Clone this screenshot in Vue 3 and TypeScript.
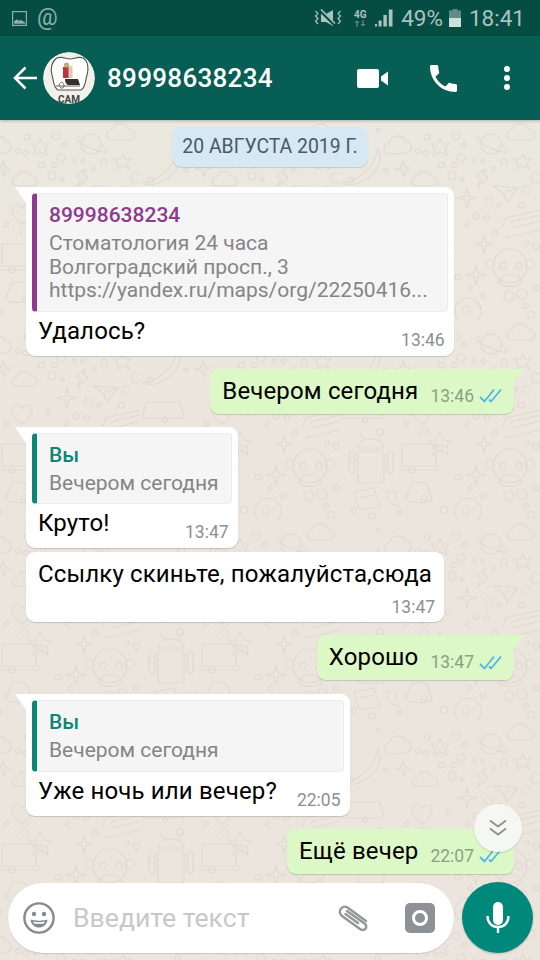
<script setup lang="ts">
interface Quote {
  author: string
  lines: string[]
  color: string
}

interface Message {
  id: number
  out: boolean
  text: string
  time: string
  tail?: boolean
  quote?: Quote
  stack?: boolean
  cls: string
}

const messages: Message[] = [
  {
    id: 1,
    out: false,
    tail: true,
    text: 'Удалось?',
    time: '13:46',
    cls: 'm-first',
    quote: {
      author: '89998638234',
      color: '#8e3b8f',
      lines: ['Стоматология 24 часа', 'Волгоградский просп., 3', 'https://yandex.ru/maps/org/22250416...'],
    },
  },
  { id: 2, out: true, tail: true, text: 'Вечером сегодня', time: '13:46', cls: 'm-gap' },
  {
    id: 3,
    out: false,
    tail: true,
    text: 'Круто!',
    time: '13:47',
    cls: 'm-gap',
    quote: { author: 'Вы', color: '#0b8775', lines: ['Вечером сегодня'] },
  },
  { id: 4, out: false, text: 'Ссылку скиньте, пожалуйста,сюда', time: '13:47', stack: true, cls: 'm-near' },
  { id: 5, out: true, tail: true, text: 'Хорошо', time: '13:47', cls: 'm-gap' },
  {
    id: 6,
    out: false,
    tail: true,
    text: 'Уже ночь или вечер?',
    time: '22:05',
    cls: 'm-wide',
    quote: { author: 'Вы', color: '#0b8775', lines: ['Вечером сегодня'] },
  },
  { id: 7, out: true, tail: true, text: 'Ещё вечер', time: '22:07', cls: 'm-gap' },
]

// мелкие кружки обоев, координаты внутри плитки 200x200
const dots: [number, number, number][] = [
  [38, 10, 2], [87, 17, 3], [116, 16, 3.5], [78, 31, 2.5], [86, 33, 2.5], [124, 25, 2.5], [101, 45, 3],
  [114, 45, 2.5], [121, 38, 4], [134, 41, 2], [143, 41, 2], [112, 56, 4], [122, 59, 2], [154, 49, 2],
  [46, 50, 2], [164, 42, 3], [196, 58, 5], [186, 70, 4], [149, 81, 4], [159, 85, 2], [181, 85, 3],
  [136, 96, 3], [147, 98, 2.5], [155, 113, 2.5], [127, 104, 2], [196, 126, 3], [187, 123, 2],
  [118, 157, 3], [130, 168, 2.5], [143, 176, 2.5], [196, 168, 3], [186, 186, 2.5], [191, 195, 3.5],
  [10, 60, 3], [25, 100, 2.5], [40, 112, 3.5], [66, 104, 2.5], [84, 112, 4], [100, 128, 3], [108, 92, 2.5],
  [12, 140, 3], [72, 150, 3], [84, 178, 2.5], [104, 190, 3.5], [14, 190, 2.5], [32, 196, 3], [60, 192, 2],
]
</script>

<template>
  <div class="phone">
    <header class="status">
      <div class="status-left">
        <svg width="15" height="15" viewBox="0 0 15 15">
          <rect x="0.6" y="0.6" width="13.8" height="13.8" fill="none" stroke="#8fb0aa" stroke-width="1.2" />
          <path d="M2 12.8 V10.5 L4.8 8.2 L6.8 9.8 L8.8 9 L13 11.2 V12.8 Z" fill="#8fb0aa" />
        </svg>
        <span class="st-at">@</span>
      </div>
      <div class="status-right">
        <svg width="28" height="18" viewBox="0 0 28 18">
          <path d="M7 5 H12 L19 1 V17 L12 13 H7 Z" fill="#a9c4bf" />
          <path d="M7 2 L21 16" stroke="#054d43" stroke-width="3.4" />
          <path d="M7 0.5 L21 14.5" stroke="#a9c4bf" stroke-width="1.6" />
          <path d="M1.5 2 L4 4.5 L1.5 7 L4 9.5 L1.5 12 L4 15 M26.5 2 L24 4.5 L26.5 7 L24 9.5 L26.5 12 L24 15" fill="none" stroke="#a9c4bf" stroke-width="1.2" />
        </svg>
        <div class="st-net">
          <span class="st-4g">4G</span>
          <svg width="12" height="7" viewBox="0 0 12 7">
            <path d="M3 7 V1 M1 3 L3 1 L5 3" stroke="#6f9a93" stroke-width="1" fill="none" />
            <path d="M9 0 V6 M7 4 L9 6 L11 4" stroke="#6f9a93" stroke-width="1" fill="none" />
          </svg>
        </div>
        <svg class="st-signal" width="18" height="18" viewBox="0 0 18 18">
          <rect x="0" y="15" width="2" height="2.5" fill="#a9c4bf" />
          <rect x="3.6" y="11.5" width="3" height="6" fill="#a9c4bf" />
          <rect x="8.4" y="6" width="3.4" height="11.5" fill="#a9c4bf" />
          <rect x="13.8" y="0.5" width="3.7" height="17" fill="#a9c4bf" />
        </svg>
        <span class="st-text">49%</span>
        <svg class="st-bat" width="12" height="18" viewBox="0 0 12 18">
          <path d="M3.5 0 H8.5 V1.5 H12 V18 H0 V1.5 H3.5 Z" fill="#5f8d86" />
          <rect x="0" y="9" width="12" height="9" fill="#cfe0dc" />
        </svg>
        <span class="st-text st-time">18:41</span>
      </div>
    </header>

    <div class="appbar">
      <svg class="back" width="24" height="24" viewBox="0 0 24 24">
        <path d="M24 12 H2 M12.5 1.5 L2 12 L12.5 22.5" fill="none" stroke="#fff" stroke-width="2.5" />
      </svg>
      <div class="avatar">
        <svg width="52" height="52" viewBox="0 0 52 52">
          <circle cx="26" cy="26" r="26" fill="#f1f0ec" />
          <path d="M14 6 C19 4 23 7 27 7 C31 7 35 4 40 6 C45 9 46 16 44 23 C42 29 43 35 38 38 L15 38 C10 35 11 29 9 23 C7 16 9 9 14 6 Z" fill="#fff" stroke="#55544f" stroke-width="1.1" />
          <rect x="20" y="15" width="6" height="11" fill="#b9343c" />
          <rect x="25.5" y="14" width="4" height="12" fill="#d9cdb4" />
          <circle cx="23.5" cy="13" r="2.6" fill="#c9a77f" />
          <path d="M22 27 H35 L37 33 H26 C24 33 22 31 22 27 Z" fill="#36302c" />
          <path d="M16 33 C18 28 21 30 21 34 C21 37 17 37 16 33 Z M13 34 H37" fill="none" stroke="#6c675f" stroke-width="1" />
          <text x="26" y="51" class="avatar-label">САМ</text>
        </svg>
      </div>
      <span class="title">89998638234</span>
      <div class="actions">
        <svg class="a-video" width="31" height="19" viewBox="0 0 31 19">
          <rect x="0" y="0" width="22" height="19" rx="2" fill="#fff" />
          <path d="M24 7.5 L31 2.5 V16.5 L24 11.5 Z" fill="#fff" />
        </svg>
        <svg class="a-phone" width="27" height="27" viewBox="3 3 18 18">
          <path d="M6.6 10.8c1.4 2.8 3.8 5.1 6.6 6.6l2.2-2.2c.3-.3.7-.4 1-.2 1.1.4 2.3.6 3.6.6.6 0 1 .4 1 1V20c0 .6-.4 1-1 1C10.6 21 3 13.4 3 4c0-.6.4-1 1-1h3.5c.6 0 1 .4 1 1 0 1.3.2 2.5.6 3.6.1.3 0 .7-.2 1z" fill="#fff" />
        </svg>
        <div class="dots"><i></i><i></i><i></i></div>
      </div>
    </div>

    <main class="chat">
      <svg class="wallpaper" width="540" height="840">
        <defs>
          <pattern id="doodles" x="140" y="0" width="200" height="200" patternUnits="userSpaceOnUse">
            <g fill="none" stroke="#dfdbd1" stroke-width="1.2">
              <circle v-for="(d, i) in dots" :key="i" :cx="d[0]" :cy="d[1]" :r="d[2]" />
              <!-- облака -->
              <path d="M48 34 C42 32 43 24 49 24 C50 15 62 13 65 21 C72 20 74 32 66 33 Z" />
              <path d="M171 20 C165 18 166 11 172 10 C174 2 186 2 188 9 C196 9 197 19 190 20 Z" />
              <path d="M76 66 C70 64 71 57 77 57 C79 50 89 50 91 56 C98 56 99 65 93 66 Z" />
              <!-- звёзды -->
              <path d="M100 18 L103 24 L109 24 L105 29 L107 35 L100 32 L94 35 L95 29 L92 24 L98 24 Z" />
              <path d="M183 34 L185 39 L191 39 L187 43 L189 49 L183 46 L177 49 L178 43 L174 39 L180 39 Z" />
              <path d="M63 41 L65 47 L71 48 L65 50 L64 56 L61 50 L56 49 L61 47 Z" />
              <path d="M127 68 L129 76 L137 78 L129 80 L127 88 L125 80 L117 78 L125 76 Z" />
              <path d="M144 116 L146 122 L152 124 L146 126 L144 133 L142 126 L136 124 L142 122 Z" />
              <path d="M136 146 L138 153 L145 155 L138 157 L136 164 L134 157 L127 155 L134 153 Z" />
              <!-- планета -->
              <circle cx="151" cy="24" r="10" />
              <path d="M140 16 C135 17 136 20 144 25 C152 30 167 34 167 31 C168 29 165 27 161 25" />
              <!-- банан -->
              <path d="M3 63 C18 60 34 50 38 28 L40 38 C40 52 24 64 8 65 Z" />
              <!-- молния -->
              <path d="M146 49 L136 56 L141 58 L137 68 L148 57 L143 55 Z" />
              <!-- самолётик -->
              <path d="M153 66 L178 68 L167 82 L163 73 Z M163 73 L178 68" />
              <!-- билет -->
              <path d="M162 107 L166 98 L200 90 M165 118 L200 110 M170 102 L200 95 M172 108 L200 101" />
              <!-- обезьянка -->
              <circle cx="170" cy="146" r="17" />
              <circle cx="150" cy="144" r="4.5" /><circle cx="190" cy="144" r="4.5" />
              <circle cx="163" cy="146" r="3.4" /><circle cx="179" cy="146" r="3.4" />
              <path d="M158 162 C164 152 176 152 182 162 C178 168 164 168 158 162 Z" />
              <circle cx="169" cy="176" r="5" /><circle cx="182" cy="174" r="5" />
              <!-- пончик -->
              <circle cx="128" cy="191" r="13" /><circle cx="126" cy="190" r="4" />
              <!-- андроид -->
              <path d="M18 128 C18 116 44 116 44 128 Z M24 120 L20 113 M38 120 L42 113" />
              <rect x="18" y="131" width="26" height="32" rx="3" />
              <rect x="9" y="131" width="6" height="22" rx="3" /><rect x="47" y="131" width="6" height="22" rx="3" />
              <!-- сердце -->
              <path d="M72 90 C72 83 82 83 82 90 C82 83 92 83 92 90 C92 98 82 104 82 104 C82 104 72 98 72 90 Z" />
              <!-- ноутбук и мелочи -->
              <path d="M6 82 H40 L44 98 H2 Z" />
              <path d="M62 124 H96 V146 H62 Z M58 150 H100" />
              <path d="M70 168 C70 160 88 160 88 168 L92 178 C92 184 66 184 66 178 Z" />
              <path d="M100 112 L104 120 L112 121 L106 127 L108 135 L100 131 L93 135 L94 127 L88 121 L96 120 Z" />
              <path d="M14 172 L34 168 L40 186 L20 190 Z M20 178 L34 175" />
              <path d="M46 172 C46 180 52 186 60 186 M46 172 H56 V180" />
            </g>
          </pattern>
        </defs>
        <rect width="540" height="840" fill="url(#doodles)" />
      </svg>

      <div class="date-row"><span class="date">20 АВГУСТА 2019 Г.</span></div>

      <div
        v-for="m in messages"
        :key="m.id"
        class="row"
        :class="[m.cls, m.out ? 'row-out' : 'row-in']"
      >
        <div class="bubble" :class="{ 'bubble-out': m.out, 'bubble-in': !m.out, 'has-tail': m.tail, 'has-quote': m.quote }">
          <div v-if="m.quote" class="quote" :style="{ borderLeftColor: m.quote.color }">
            <div class="quote-author" :style="{ color: m.quote.color }">{{ m.quote.author }}</div>
            <div v-for="line in m.quote.lines" :key="line" class="quote-line">{{ line }}</div>
          </div>
          <div class="line" :class="{ 'line-stack': m.stack }">
            <span class="text">{{ m.text }}</span>
            <span class="meta">
              <span class="time" :class="{ 'time-out': m.out }">{{ m.time }}</span>
              <svg v-if="m.out" class="ticks" width="23" height="15" viewBox="0 0 23 15">
                <path d="M1 9 L5.5 13.5 L15 1.5 M10 11.5 L12 13.5 L22 1.5" fill="none" stroke="#4fb6ec" stroke-width="1.8" />
              </svg>
            </span>
          </div>
        </div>
      </div>

      <button class="scroll-down" type="button">
        <svg width="18" height="18" viewBox="0 0 18 18">
          <path d="M1 1.5 L9 7.5 L17 1.5 M1 9.5 L9 15.5 L17 9.5" fill="none" stroke="#8f9393" stroke-width="2" />
        </svg>
      </button>

      <div class="composer">
        <div class="input">
          <svg class="smile" width="32" height="32" viewBox="0 0 32 32">
            <circle cx="16" cy="16" r="14.6" fill="none" stroke="#858a8d" stroke-width="2.4" />
            <circle cx="11" cy="12" r="2.2" fill="#858a8d" />
            <circle cx="21" cy="12" r="2.2" fill="#858a8d" />
            <path d="M7.5 17.5 C11 19 21 19 24.5 17.5 C24 23 20 25.5 16 25.5 C12 25.5 8 23 7.5 17.5 Z" fill="#858a8d" />
            <path d="M10 19.6 C13 20.4 19 20.4 22 19.6 L21 21.4 C18 22 14 22 11 21.4 Z" fill="#fff" />
          </svg>
          <span class="placeholder">Введите текст</span>
          <svg class="clip" width="31" height="26" viewBox="0 0 31 26">
            <path d="M9 6 L26.5 18.5 C31 22 26 27 22 24 L4 11 C-1 7 4 -1 9.5 2.5 L28 16 M7.5 9 L20 18" fill="none" stroke="#93979a" stroke-width="2.4" stroke-linecap="round" />
          </svg>
          <svg class="cam" width="30" height="30" viewBox="0 0 30 30">
            <rect x="0" y="0" width="30" height="30" rx="5" fill="#8e9195" />
            <circle cx="15" cy="15" r="6.5" fill="none" stroke="#fff" stroke-width="3" />
          </svg>
        </div>
        <div class="mic">
          <svg width="24" height="31" viewBox="0 0 24 31">
            <rect x="7" y="0" width="10" height="23" rx="5" fill="#fff" />
            <path d="M1.5 14 C1.5 21 6 25 12 25 C18 25 22.5 21 22.5 14" fill="none" stroke="#fff" stroke-width="2.4" />
            <rect x="10.8" y="24" width="2.4" height="7" fill="#fff" />
          </svg>
        </div>
      </div>
    </main>
  </div>
</template>

<style>
html,
body {
  margin: 0;
  background: #ece5dd;
}
</style>

<style scoped>
.phone {
  width: 540px;
  height: 960px;
  overflow: hidden;
  display: flex;
  flex-direction: column;
  font-family: Roboto, "Noto Sans", sans-serif;
  background: #ece5dd;
}

.status {
  height: 36px;
  flex: none;
  display: flex;
  align-items: center;
  justify-content: space-between;
  padding: 0 15px 0 12px;
  background: #054d43;
}

.status-left,
.status-right {
  display: flex;
  align-items: center;
}

.st-at {
  margin-left: 10px;
  font-size: 23px;
  line-height: 30px;
  color: #8fb0aa;
}

.status-right svg {
  flex: none;
}

.st-net {
  display: flex;
  flex-direction: column;
  align-items: center;
  margin-left: 10px;
  width: 16px;
}

.st-4g {
  font-size: 10px;
  line-height: 11px;
  font-weight: 700;
  color: #a9c4bf;
}

.st-signal {
  margin-left: 7px;
}

.st-text {
  margin-left: 8px;
  font-size: 22.5px;
  line-height: 30px;
  color: #a9c4bf;
}

.st-bat {
  margin-left: 6px;
}

.st-time {
  margin-left: 8px;
}

.appbar {
  position: relative;
  z-index: 2;
  height: 84px;
  flex: none;
  display: flex;
  align-items: center;
  padding-left: 13px;
  background: #075e54;
  box-shadow: 0 1px 3px rgba(0, 0, 0, 0.25);
}

.back {
  flex: none;
}

.avatar {
  width: 52px;
  height: 52px;
  margin-left: 6px;
  border-radius: 50%;
  overflow: hidden;
  flex: none;
}

.avatar-label {
  font-size: 10px;
  font-weight: 700;
  text-anchor: middle;
  fill: #444;
}

.title {
  margin-left: 12px;
  font-size: 26px;
  font-weight: 500;
  letter-spacing: 0.3px;
  color: #fff;
}

.actions {
  margin-left: auto;
  display: flex;
  align-items: center;
  padding-right: 30px;
}

.a-phone {
  margin-left: 42px;
}

.dots {
  margin-left: 47px;
  display: flex;
  flex-direction: column;
  gap: 3px;
}

.dots i {
  width: 6px;
  height: 6px;
  border-radius: 50%;
  background: #fff;
}

.chat {
  position: relative;
  flex: 1;
  display: flex;
  flex-direction: column;
  padding-top: 7px;
  background: linear-gradient(#ebe8e0, #ece5dd 45%);
}

.wallpaper {
  position: absolute;
  left: 0;
  top: 0;
}

.date-row {
  position: relative;
  display: flex;
  justify-content: center;
  margin-bottom: 20px;
}

.date {
  padding: 7px 10px;
  line-height: 26px;
  font-size: 19.4px;
  color: #4a5a62;
  background: #d5e8f3;
  border-radius: 9px;
  box-shadow: 0 1px 1px rgba(0, 0, 0, 0.13);
}

.row {
  position: relative;
  display: flex;
}

.row-in {
  justify-content: flex-start;
  padding-left: 26px;
}

.row-out {
  justify-content: flex-end;
  padding-right: 26px;
}

.m-gap {
  margin-top: 13px;
}

.m-wide {
  margin-top: 14px;
}

.m-near {
  margin-top: 4px;
}

.m-first {
  margin-top: 0;
}

.m-first .quote {
  padding-right: 19px;
}

.bubble {
  position: relative;
  border-radius: 9px;
  box-shadow: 0 1px 1px rgba(0, 0, 0, 0.16);
}

.bubble-in {
  background: #fff;
}

.bubble-out {
  background: #dcf8c6;
}

.has-tail.bubble-in::before,
.has-tail.bubble-out::before {
  content: "";
  position: absolute;
  top: 0;
  width: 0;
  height: 0;
  border-style: solid;
}

.has-tail.bubble-in {
  border-top-left-radius: 0;
}

.has-tail.bubble-in::before {
  left: -11px;
  border-width: 16px 0 0 11px;
  border-color: #fff transparent transparent transparent;
}

.has-tail.bubble-out {
  border-top-right-radius: 0;
}

.has-tail.bubble-out::before {
  right: -11px;
  border-width: 13px 11px 0 0;
  border-color: #dcf8c6 transparent transparent transparent;
}

.has-quote {
  padding: 6px 6px 0;
}

.quote {
  box-sizing: border-box;
  padding: 7px 12px 8px 12px;
  background: #f5f5f5;
  border: 1px solid #ececec;
  border-left: 5px solid;
  border-radius: 4px;
}

.quote-author {
  font-size: 21px;
  line-height: 28px;
  font-weight: 500;
  margin-bottom: 3px;
}

.quote-line {
  font-size: 21px;
  line-height: 23.5px;
  color: #858585;
  white-space: nowrap;
}

.line {
  display: flex;
  align-items: flex-end;
  padding: 7px 12px 8px 12px;
  gap: 12px;
}

.has-quote .line {
  padding: 4px 3px 10px 6px;
  gap: 20px;
  justify-content: space-between;
}

.line-stack {
  flex-direction: column;
  align-items: stretch;
  gap: 8px;
  padding-bottom: 5px;
}

.line-stack .meta {
  align-self: flex-end;
  margin-right: -3px;
}

.text {
  font-size: 24px;
  line-height: 30px;
  letter-spacing: 0.15px;
  color: #000;
  white-space: nowrap;
}

.meta {
  display: flex;
  align-items: center;
  flex: none;
  gap: 5px;
  height: 20px;
}

.has-quote .meta {
  margin-bottom: -4px;
}

.time {
  font-size: 17.5px;
  line-height: 20px;
  color: #8d9091;
}

.time-out {
  color: #89a281;
}

.ticks {
  flex: none;
}

.scroll-down {
  position: absolute;
  right: 18px;
  top: 684px;
  width: 48px;
  height: 48px;
  padding: 0;
  display: flex;
  align-items: center;
  justify-content: center;
  border: none;
  border-radius: 50%;
  background: rgba(246, 246, 244, 0.94);
  box-shadow: 0 1px 2px rgba(0, 0, 0, 0.15);
}

.composer {
  position: relative;
  margin-top: auto;
  display: flex;
  align-items: center;
  gap: 8px;
  padding: 0 7px 7px 8px;
}

.input {
  flex: 1;
  height: 70px;
  display: flex;
  align-items: center;
  padding: 0 19px 0 15px;
  background: #fff;
  border-radius: 35px;
  box-shadow: 0 1px 1px rgba(0, 0, 0, 0.12);
}

.placeholder {
  margin-left: 18px;
  font-size: 26.6px;
  color: #c8c8c8;
}

.clip {
  margin-left: auto;
}

.cam {
  margin-left: 36px;
}

.mic {
  width: 71px;
  height: 71px;
  flex: none;
  display: flex;
  align-items: center;
  justify-content: center;
  border-radius: 50%;
  background: #00897b;
  box-shadow: 0 1px 2px rgba(0, 0, 0, 0.2);
}
</style>
